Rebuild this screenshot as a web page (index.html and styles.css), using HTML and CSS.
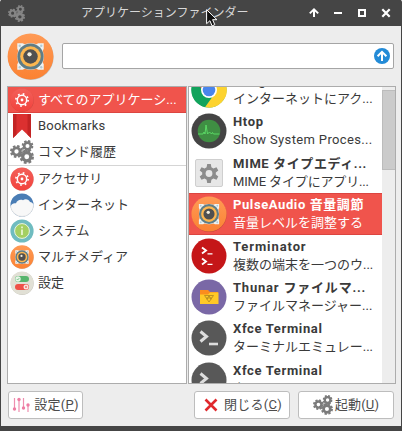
FILE: index.html
```html
<!DOCTYPE html>
<html lang="ja">
<head>
<meta charset="utf-8">
<title>アプリケーションファインダー</title>
<link rel="stylesheet" href="styles.css">
</head>
<body>
<svg class="defs" width="0" height="0">
  <defs>
    <linearGradient id="orange" x1="0" y1="0" x2="0" y2="1"><stop offset="0" stop-color="#ff9a55"/><stop offset="1" stop-color="#fb8233"/></linearGradient>
    <linearGradient id="red" x1="0" y1="0" x2="0" y2="1"><stop offset="0" stop-color="#f3605a"/><stop offset="1" stop-color="#f2423c"/></linearGradient>
    <symbol id="speaker" viewBox="0 0 48 48">
      <circle cx="24.4" cy="24.8" r="23.2" fill="#000" opacity=".2"/>
      <circle cx="24" cy="24" r="23.4" fill="url(#orange)"/>
      <path d="M11 10.500H16l2 1q6-2 12 0l2-1h5.500V16l-1 2q2 6 0 12l1 2v5.500H32l-2-1q-6 2-12 0l-2 1h-5.500V32l1-2q-2-6 0-12l-1-2v-5.500z" fill="#eef3f4"/>
      <g fill="#b4ccd4"><circle cx="13" cy="13" r="1.200"/><circle cx="35" cy="13" r="1.200"/><circle cx="13" cy="35" r="1.200"/><circle cx="35" cy="35" r="1.200"/></g>
      <circle cx="24" cy="24" r="13.400" fill="#607d86"/>
      <circle cx="24" cy="24" r="10.500" fill="#fdb750"/>
      <circle cx="24" cy="24" r="7.400" fill="#505050"/>
      <circle cx="23" cy="21.800" r="2.200" fill="#f4f0e0"/>
    </symbol>
    <symbol id="gear" viewBox="0 0 24 24">
      <circle cx="12" cy="12" r="6.700" fill="none" stroke="currentColor" stroke-width="5.400"/>
      <circle cx="12" cy="12" r="10" fill="none" stroke="currentColor" stroke-width="4" stroke-dasharray="4.500 3.354"/>
    </symbol>
    <symbol id="gears" viewBox="0 0 24 24">
      <use href="#gear" x="0" y="5" width="13" height="13"/>
      <use href="#gear" x="11.500" y="0" width="12" height="12"/>
      <use href="#gear" x="9.500" y="9.500" width="14.500" height="14.500"/>
    </symbol>
    <symbol id="cog" viewBox="0 0 24 24">
      <circle cx="12.200" cy="12.400" r="11.600" fill="#000" opacity=".15"/>
      <circle cx="12" cy="12" r="11.600" fill="url(#red)"/>
      <circle cx="12" cy="12" r="4.700" fill="none" stroke="#fff" stroke-width="1.500"/>
      <circle cx="12" cy="12" r="6.100" fill="none" stroke="#fff" stroke-width="1.700" stroke-dasharray="1.700 3.090"/>
      <circle cx="12" cy="12" r="1.400" fill="#fff"/>
    </symbol>
    <symbol id="xterm" viewBox="0 0 36 36">
      <circle cx="18" cy="18" r="17.500" fill="#585858"/>
      <path d="M9.500 11.500l6 5-6 5" fill="none" stroke="#ddd" stroke-width="3"/>
      <path d="M18 24h9" stroke="#ddd" stroke-width="2.600"/>
    </symbol>
  </defs>
</svg>
<div class="window">
  <header class="titlebar">
    <svg class="app-icon" viewBox="0 0 24 24"><use href="#gears"/></svg>
    <h1 class="title">アプリケーションファインダー</h1>
    <div class="controls">
      <svg viewBox="0 0 12 12"><path d="M6 10V3M1.800 6.400L6 2.400l4.200 4" fill="none" stroke="#fff" stroke-width="2"/></svg>
      <svg viewBox="0 0 12 12"><path d="M2 6h8" stroke="#fff" stroke-width="2"/></svg>
      <svg viewBox="0 0 12 12"><path d="M3 3h6v6H3z" fill="none" stroke="#fff" stroke-width="2"/></svg>
      <svg viewBox="0 0 12 12"><path d="M2.300 2.300l7.400 7.400M9.700 2.300L2.300 9.700" stroke="#fff" stroke-width="2.200"/></svg>
    </div>
  </header>
  <svg class="pointer" viewBox="0 0 12 18"><path d="M.6.700v14l3.300-3 2.200 5.200 2.700-1.200-2.200-5h4.300z" fill="#111" stroke="#fff" stroke-width="1"/></svg>

  <div class="search">
    <svg class="search-icon"><use href="#speaker"/></svg>
    <div class="entry">
      <svg viewBox="0 0 16 16"><circle cx="8" cy="8" r="8" fill="#238bd7"/><path d="M8 13V4.500M3.600 8.200L8 3.900l4.400 4.300" fill="none" stroke="#fff" stroke-width="2"/></svg>
    </div>
  </div>

  <main class="panes">
    <ul class="categories">
      <li class="selected"><svg viewBox="0 0 24 24"><use href="#cog"/></svg><span>すべてのアプリケーシ...</span></li>
      <li><svg viewBox="0 0 24 24"><path d="M3 0h18v24l-9-8.500L3 24z" fill="#dc3030"/><path d="M3 0h3.500v20.700L3 24zM17.500 0H21v24l-3.500-3.300z" fill="#c32424"/></svg><span class="latin">Bookmarks</span></li>
      <li><svg class="gray" viewBox="0 0 24 24"><use href="#gears"/></svg><span>コマンド履歴</span></li>
      <li class="after-line"><svg viewBox="0 0 24 24"><use href="#cog"/></svg><span>アクセサリ</span></li>
      <li><svg viewBox="0 0 24 24"><circle cx="12" cy="12" r="11.500" fill="#4a7db5"/><path d="M.6 13.500C1.500 10.500 4 9.800 6 10.300 7 7 10.500 6 13 7.200 15.500 5.500 19 6.500 20 9c1.500.2 2.800 1.200 3.500 2.500A11.500 11.500 0 0 1 .6 13.500z" fill="#f8f8f8"/><path d="M.6 13a11.500 11.500 0 0 0 22.900 0" fill="none" stroke="#d8d8d8" stroke-width=".6"/></svg><span>インターネット</span></li>
      <li><svg viewBox="0 0 24 24"><circle cx="12" cy="12" r="11.600" fill="#6fbcc0"/><circle cx="12" cy="12" r="7.400" fill="#a4cf62" stroke="#e9f4e2" stroke-width="1"/><path d="M12 10.500V16M12 7.500v1.800" stroke="#e7f3d0" stroke-width="1.800"/></svg><span>システム</span></li>
      <li><svg><use href="#speaker"/></svg><span>マルチメディア</span></li>
      <li><svg viewBox="0 0 24 24"><circle cx="12.200" cy="12.400" r="11.500" fill="#c5c4bb"/><circle cx="12" cy="12" r="11.500" fill="#e1e0d5"/><rect x="5" y="5" width="14" height="6" rx="3" fill="#57b56c"/><circle cx="8" cy="8" r="2.700" fill="#e8f5e8"/><path d="M6.700 8l1 1 1.700-2" fill="none" stroke="#57b56c" stroke-width=".7"/><rect x="5" y="13" width="14" height="6" rx="3" fill="#ef5048"/><circle cx="16" cy="16" r="2.500" fill="#fbe3df"/><path d="M15 15l2 2m0-2l-2 2" stroke="#ef5048" stroke-width=".6"/></svg><span>設定</span></li>
    </ul>

    <div class="splitter"></div>

    <section class="results">
      <ul class="apps">
        <li>
          <svg viewBox="0 0 36 36"><circle cx="18" cy="18" r="17.500" fill="#12a35c"/><path d="M18 18l-5.500 16.600A17.500 17.500 0 0 0 34.600 12H18z" fill="#fdd32f"/><path d="M2.800 9.200A17.500 17.500 0 0 1 34.500 12H18l-6 6z" fill="#db4437"/><path d="M2.800 9.200L12 22l10 2-8 11.200A17.500 17.500 0 0 1 2.800 9.200z" fill="#12a35c"/><circle cx="18" cy="18" r="8" fill="#fff"/><circle cx="18" cy="18" r="6.300" fill="#4a85ec"/></svg>
          <div><b>Google Chrome</b><span>インターネットにアク...</span></div>
        </li>
        <li>
          <svg viewBox="0 0 36 36"><circle cx="18" cy="18" r="17.500" fill="#444"/><circle cx="18" cy="18" r="11.300" fill="#3f8f43"/><path d="M7 21h5l1-2 1 2 1-9 1.500 9 2-2 2 2 1-1.500 1 1.500h6" fill="none" stroke="#5ee069" stroke-width=".9"/></svg>
          <div><b>Htop</b><span class="latin-wide">Show System Proces...</span></div>
        </li>
        <li>
          <svg viewBox="0 0 36 36"><rect x="4.500" y="4.500" width="27" height="27" rx="1.500" fill="#e7e7e7" stroke="#cfcfcf"/><path d="M16.200 9h3.600l.6 3.300 2 1.100 3.100-1.100 1.800 3.100-2.500 2.100v2l2.500 2.100-1.800 3.100-3.100-1.100-2 1.100-.6 3.300h-3.600l-.6-3.300-2-1.100-3.100 1.100-1.800-3.100 2.500-2.100v-2l-2.500-2.100 1.800-3.100 3.100 1.100 2-1.100z" fill="#8c8c8c"/><circle cx="18" cy="18.500" r="3.400" fill="#e7e7e7"/></svg>
          <div><b class="t-mime">MIME タイプエディ...</b><span class="d-mime">MIME タイプにアプリ...</span></div>
        </li>
        <li class="selected">
          <svg><use href="#speaker"/></svg>
          <div><b class="t-pulse">PulseAudio 音量調節</b><span>音量レベルを調整する</span></div>
        </li>
        <li>
          <svg viewBox="0 0 36 36"><circle cx="18" cy="18" r="17.500" fill="#c51618"/><path d="M11 9.500l4 3-4 3M11 20.500l4 3-4 3" fill="none" stroke="#fff" stroke-width="1.900"/><path d="M16.500 15.800h5M16.500 26.300h5" stroke="#fff" stroke-width="1.300"/></svg>
          <div><b class="t-term">Terminator</b><span>複数の端末を一つのウ...</span></div>
        </li>
        <li>
          <svg viewBox="0 0 36 36"><circle cx="18" cy="18" r="17.500" fill="#7a68a6"/><path d="M9 11h8l2 2h8v12H9z" fill="#fb8c1e"/><path d="M9 25V15.500h8l2-2h8.500V25z" fill="#ffc927"/><path d="M13.500 16.500h9l-4.500 6.500zM15 19h6M18 16.500l-2 4M18 16.500l2 4" fill="none" stroke="#b88c20" stroke-width=".9"/></svg>
          <div><b class="t-thunar">Thunar ファイルマ...</b><span>ファイルマネージャー...</span></div>
        </li>
        <li>
          <svg><use href="#xterm"/></svg>
          <div><b>Xfce Terminal</b><span>ターミナルエミュレー...</span></div>
        </li>
        <li>
          <svg><use href="#xterm"/></svg>
          <div><b>Xfce Terminal</b><span>ターミナルエミュレー...</span></div>
        </li>
      </ul>
      <div class="scrollbar"><div class="thumb"></div></div>
    </section>
  </main>

  <footer class="actions">
    <button class="prefs"><svg viewBox="0 0 18 18"><g stroke="#ee8fb0" stroke-width="1.200" fill="#ee7da3"><path d="M2.500 2v11M7 4v12M11.500 2v10M16 8v8"/><g stroke="none"><circle cx="2.500" cy="13" r="1.700"/><circle cx="7" cy="3.500" r="1.700"/><circle cx="11.500" cy="12" r="1.700"/><circle cx="16" cy="9" r="1.700"/></g></g></svg><span>設定(<u>P</u>)</span></button>
    <button class="close"><svg viewBox="0 0 18 18"><path d="M3.500 3.500l11 11M14.500 3.500l-11 11" stroke="#e0282c" stroke-width="2.600"/></svg><span>閉じる(<u>C</u>)</span></button>
    <button class="launch"><svg class="gray" viewBox="0 0 24 24"><use href="#gears"/></svg><span>起動(<u>U</u>)</span></button>
  </footer>
</div>
</body>
</html>
```

FILE: styles.css
```css
* { box-sizing: border-box; }
body {
  margin: 0;
  width: 402px;
  height: 431px;
  overflow: hidden;
  font: 13px/18px Roboto, "Noto Sans CJK JP", sans-serif;
  color: #3a3a3a;
}
ul { list-style: none; margin: 0; padding: 0; }
svg { display: block; flex: none; }
.defs { position: absolute; }

.window {
  position: relative;
  display: flex;
  flex-direction: column;
  height: 431px;
  border: solid #454545;
  border-width: 0 1px 5px;
  border-radius: 2px 2px 0 0;
  background: #ededed;
}

.titlebar {
  display: flex;
  align-items: center;
  height: 26px;
  padding: 0 7px;
  background: #454545;
  color: #d8d8d8;
}
.app-icon { width: 17px; height: 17px; color: #858585; }
.title {
  margin: 0 auto 0 56px;
  font-size: 12px;
  font-weight: 400;
  white-space: nowrap;
}
.controls { display: flex; gap: 12px; margin-right: 2px; }
.controls svg { width: 12px; height: 12px; }
.pointer { position: absolute; left: 205px; top: 9px; width: 12px; height: 18px; }

.search { display: flex; align-items: center; gap: 7.5px; height: 60px; padding: 0 7px; }
.search-icon { width: 47px; height: 47px; margin-left: -1px; }
.entry {
  display: flex;
  align-items: center;
  justify-content: flex-end;
  flex: 1;
  height: 26px;
  padding-right: 3px;
  border: 1px solid #a5a5a5;
  border-radius: 2px;
  background: #fff;
}
.entry svg { width: 16px; height: 16px; }

.panes { display: flex; height: 298px; padding: 0 5px 0 6px; }
.categories, .results { border: 1px solid #acacac; background: #fff; }
.categories { width: 180px; }
.categories li {
  display: flex;
  align-items: center;
  gap: 4px;
  height: 26px;
  padding-left: 2px;
  white-space: nowrap;
}
.categories svg { width: 24px; height: 24px; }
.categories .after-line { height: 27px; border-top: 1px solid #d5d5d5; }
.categories .selected { border-bottom: 1px solid #dc4540; }
.categories .latin { letter-spacing: .2px; }
.selected { background: #f0544c; color: #fff; }
.gray { color: #7b7b7b; }

.splitter { width: 1px; }
.results { display: flex; flex: 1; overflow: hidden; }
.apps { width: 193px; margin-top: -17.7px; }
.apps li {
  display: flex;
  align-items: center;
  gap: 6px;
  height: 41.4px;
  padding-left: 2px;
}
.apps .selected { box-shadow: inset 0 1px #dc4540, inset 0 -1px #dc4540; }
.apps svg { width: 36px; height: 36px; }
.apps b, .apps span { display: block; height: 18px; white-space: nowrap; }
.apps b { letter-spacing: .65px; }
.apps .t-mime { letter-spacing: .6px; }
.apps .t-pulse { letter-spacing: .6px; }
.apps .t-term { letter-spacing: .9px; }
.apps .t-thunar { letter-spacing: .8px; }
.apps .d-mime { letter-spacing: -.15px; }
.apps .latin-wide { letter-spacing: .35px; }
.scrollbar { flex: 1; padding-top: 3px; background: #ededed; }
.thumb { height: 80px; background: #cbcbcb; border: 1px solid #bcbcbc; border-right: 0; }

.actions { display: flex; height: 42px; padding: 7px; }
.actions button {
  display: flex;
  align-items: center;
  justify-content: center;
  gap: 4px;
  height: 28px;
  padding: 0;
  border: 1px solid #bdbdbd;
  border-radius: 3px;
  background: #fff;
  font: inherit;
  letter-spacing: .25px;
  color: #4c4c4c;
  white-space: nowrap;
}
.actions svg { width: 18px; height: 18px; }
.actions .prefs { width: 75px; }
.actions .close { width: 96px; margin-left: auto; }
.actions .launch { width: 96px; margin-left: 8px; gap: 2px; }
.actions .launch svg { width: 20px; height: 20px; }
```
